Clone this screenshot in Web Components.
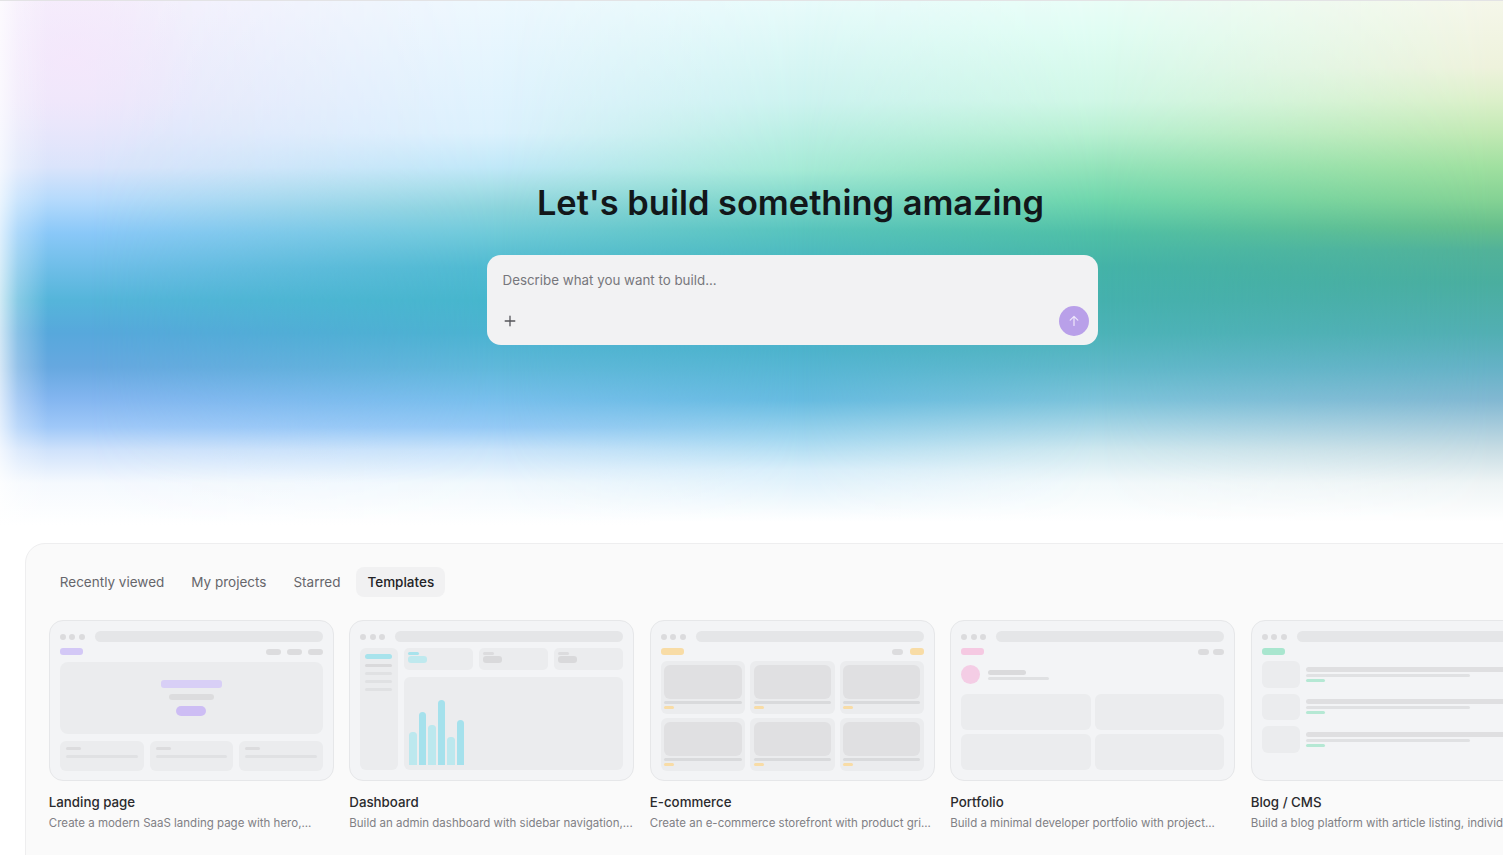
<!DOCTYPE html>
<html lang="en">
<head>
<meta charset="utf-8">
<title>Templates</title>
<style>
  html, body { margin: 0; height: 100%; overflow: hidden; background: #fff; }
  body { font-family: Inter, "Liberation Sans", sans-serif; color: #18181b; }
</style>
</head>
<body>
<hero-area>
  <prompt-box placeholder="Describe what you want to build..."></prompt-box>
</hero-area>
<projects-panel>
  <template-card title="Landing page" desc="Create a modern SaaS landing page with hero,..." kind="landing"></template-card>
  <template-card title="Dashboard" desc="Build an admin dashboard with sidebar navigation,..." kind="dashboard"></template-card>
  <template-card title="E-commerce" desc="Create an e-commerce storefront with product gri..." kind="shop"></template-card>
  <template-card title="Portfolio" desc="Build a minimal developer portfolio with project..." kind="portfolio"></template-card>
  <template-card title="Blog / CMS" desc="Build a blog platform with article listing, individ" kind="blog"></template-card>
</projects-panel>

<script>
// colour columns of the hero wash: each fades in horizontally between from and to
const washColumns = [
  { from: 0, to: 0, stops: '#f5effc 0, #ebe8fb 100px, #dae4fb 167px, #b5dafc 200px, #8ac8f8 233px, #6fbee8 267px, #55b5da 300px, #57a8dc 333px, #66a8e0 367px, #84b6f0 400px, #9fc8f8 427px, #cfe2fb 450px, #f5f9fe 483px, #fff 525px' },
  { from: 90, to: 500, stops: '#edf8fe 0, #dbf1fd 133px, #c0e8f8 167px, #a7dfe8 187px, #8cd4dc 207px, #6fcad8 233px, #4fbad0 267px, #46b6cc 300px, #4bb3d0 333px, #5fb8da 367px, #78bfec 400px, #94c9f5 427px, #c8e3fa 450px, #f0f8fd 483px, #fff 525px' },
  { from: 500, to: 800, stops: '#e8fbfb 0, #cdf3f0 100px, #a5ead6 170px, #58c4bd 230px, #4ab8c0 260px, #4db3cc 350px, #66bbe0 400px, #a5d8f0 440px, #d8eefa 470px, #fff 522px' },
  { from: 800, to: 1100, stops: '#e9fdf7 0, #e0fdf3 33px, #d0f7e6 100px, #b8f0d2 133px, #93e3ba 167px, #6fd6ac 200px, #4fbfa6 233px, #44b3a8 267px, #45b1ae 300px, #4cb3b8 333px, #5fb8c9 367px, #7cc3da 400px, #a8d6e6 427px, #cfe8ef 450px, #f2f9fb 483px, #fff 522px' },
  { from: 1100, to: 1490, stops: '#f5f7ea 0, #eef2dc 67px, #dcf0ca 100px, #c2e9b4 133px, #a0e0a0 167px, #84d294 200px, #66bf8c 227px, #52b299 250px, #4aae9f 283px, #52afb3 333px, #65b2c6 367px, #82b8d2 400px, #a8ccdc 427px, #c8dde4 450px, #eef4f5 483px, #fff 522px' }
];

class HeroArea extends HTMLElement {
  constructor() {
    super();
    this.attachShadow({ mode: 'open' });
    this.shadowRoot.innerHTML = `
      <style>
        :host { display: block; position: relative; height: 543px; overflow: hidden; }
        .wash { position: absolute; inset: 0; pointer-events: none; }
        .pink { background: radial-gradient(130px 110px at 70px 60px, rgba(246,230,251,.7), rgba(246,230,251,0)); }
        .edge { background: linear-gradient(90deg, rgba(255,255,255,.72) 0, rgba(255,255,255,.3) 18px, rgba(255,255,255,0) 48px); }
        .line { position: absolute; left: 0; right: 0; top: 0; height: 1px; background: #e3e3e5; }
        .content { position: relative; display: flex; flex-direction: column; align-items: center; box-sizing: border-box; width: 1503px; padding: 180px 0 0 82px; }
        h1 { margin: 0 4px 30px 0; font-size: 34.4px; line-height: 45px; font-weight: 600; color: #12171a; white-space: nowrap; }
      </style>
      ${washColumns.map(c => `<div class="wash" style="background:linear-gradient(180deg, ${c.stops});${c.to ? `-webkit-mask-image:linear-gradient(90deg, transparent ${c.from}px, #000 ${c.to}px);` : ''}"></div>`).join('')}
      <div class="wash pink"></div>
      <div class="wash edge"></div>
      <div class="line"></div>
      <div class="content">
        <h1>Let's build something amazing</h1>
        <slot></slot>
      </div>
    `;
  }
}

class PromptBox extends HTMLElement {
  constructor() {
    super();
    this.attachShadow({ mode: 'open' });
    this.shadowRoot.innerHTML = `
      <style>
        :host { display: flex; flex-direction: column; justify-content: space-between; box-sizing: border-box;
          width: 611px; height: 90px; margin-right: 1px; padding: 17px 9px 9px 16px; background: #f2f2f3; border-radius: 14px; }
        .text { font-size: 13.35px; line-height: 17px; color: #77777c; }
        .row { display: flex; align-items: center; justify-content: space-between; }
        .plus { display: flex; width: 16px; height: 16px; margin-left: -1px; color: #55555a; }
        .send { display: flex; align-items: center; justify-content: center; width: 30px; height: 30px; border-radius: 50%; background: #b9a0e9; color: #eee6fb; }
      </style>
      <div class="text">${this.getAttribute('placeholder')}</div>
      <div class="row">
        <span class="plus"><svg width="16" height="16" viewBox="0 0 16 16" fill="none" stroke="currentColor" stroke-width="1.3" stroke-linecap="round"><path d="M8 3.2v9.6M3.2 8h9.6"/></svg></span>
        <span class="send"><svg width="14" height="14" viewBox="0 0 14 14" fill="none" stroke="currentColor" stroke-width="1.2" stroke-linecap="round" stroke-linejoin="round"><path d="M7 11.5v-9M3.2 6.2 7 2.4l3.8 3.8"/></svg></span>
      </div>
    `;
  }
}

class ProjectsPanel extends HTMLElement {
  constructor() {
    super();
    this.attachShadow({ mode: 'open' });
    const tabs = ['Recently viewed', 'My projects', 'Starred', 'Templates'];
    this.shadowRoot.innerHTML = `
      <style>
        :host { display: block; box-sizing: border-box; width: 1700px; height: 400px; margin-left: 25px; padding: 23px 22.8px 0; background: #fafafa; border: 1px solid #eeeeef; border-radius: 20px; }
        nav { display: flex; gap: 5px; margin-bottom: 23px; }
        nav span { padding: 0 11px; height: 30px; line-height: 30px; font-size: 13.5px; border-radius: 8px; color: #66666b; }
        nav span.active { background: #f1f1f2; color: #232326; font-weight: 500; }
        .cards { display: flex; gap: 15.3px; }
      </style>
      <nav>${tabs.map(t => `<span class="${t === 'Templates' ? 'active' : ''}">${t}</span>`).join('')}</nav>
      <div class="cards"><slot></slot></div>
    `;
  }
}

const bar = (w, h, c, extra = '') => `<i style="width:${typeof w === 'number' ? w + 'px' : w};height:${h}px;background:${c};${extra}"></i>`;
const GREY = '#dcdcde', PALE = '#e0e1e3', BOX = '#ebecee';

const thumbs = {
  landing: `
    <div class="top">${bar(23, 7, '#d3c8f6')}<b></b>${bar(15, 6, GREY)}${bar(15, 6, GREY)}${bar(15, 6, GREY)}</div>
    <div class="hero">${bar(61, 8, '#d8cff6')}${bar(45, 6, GREY)}${bar(30, 10, '#cdbdf4', 'border-radius:5px')}</div>
    <div class="row3">${[0, 1, 2].map(() => `<div class="cell">${bar(15, 3, GREY)}${bar('100%', 3, PALE)}</div>`).join('')}</div>`,
  dashboard: `
    <div class="dash">
      <div class="side">${bar(27, 5, '#a8e3ec')}${bar(27, 3, '#d9d9db')}${bar(27, 3, PALE)}${bar(27, 3, PALE)}${bar(27, 3, PALE)}</div>
      <div class="main">
        <div class="stats">
          <div class="stat">${bar(11, 3, '#a8e3ec')}${bar(19, 7, '#bfe9ee')}</div>
          <div class="stat">${bar(11, 3, GREY)}${bar(19, 7, '#d9d9db')}</div>
          <div class="stat">${bar(11, 3, GREY)}${bar(19, 7, '#d9d9db')}</div>
        </div>
        <div class="chart">
          ${[33, 53, 40, 65, 28, 45].map((h, i) => bar(7.5, h, i % 2 ? '#a5e1ec' : '#bce8ee', 'border-radius:3.5px 3.5px 0 0')).join('')}
        </div>
      </div>
    </div>`,
  shop: `
    <div class="top">${bar(23, 7, '#f8dca6')}<b></b>${bar(11, 6, GREY)}${bar(14, 7, '#f8dca6', 'margin-left:1px')}</div>
    <div class="grid">${[0, 1, 2, 3, 4, 5].map(() => `<div class="prod"><u></u>${bar('100%', 3, '#d9dadc')}${bar(10, 3, '#f8dca6')}</div>`).join('')}</div>`,
  portfolio: `
    <div class="top">${bar(23, 7, '#f5c9e2')}<b></b>${bar(11, 6, GREY)}${bar(11, 6, GREY, 'margin-left:-2px')}</div>
    <div class="who"><em></em><div>${bar(38, 5, '#dadadc')}${bar(61, 3, PALE)}</div></div>
    <div class="work"><s></s><s></s><s></s><s></s></div>`,
  blog: `
    <div class="top">${bar(23, 7, '#a9e6cf')}<b></b></div>
    <div class="posts">${[0, 1, 2].map(() => `<div class="post"><u></u><div>${bar('100%', 5, '#dfdfe1')}${bar(164, 3, PALE)}${bar(19, 3, '#b5e8d4')}</div></div>`).join('')}</div>`
};

class TemplateCard extends HTMLElement {
  constructor() {
    super();
    this.attachShadow({ mode: 'open' });
  }

  connectedCallback() {
    const kind = this.getAttribute('kind');
    this.shadowRoot.innerHTML = `
      <style>
        :host { display: block; flex: none; width: 285.2px; }
        i { display: block; border-radius: 3px; flex: none; }
        b { flex: 1; }
        .thumb { box-sizing: border-box; height: 161px; padding: 10px; background: #f3f4f6; border: 1px solid #e6e7e9; border-radius: 14px; overflow: hidden; display: flex; flex-direction: column; }
        .chrome { display: flex; align-items: center; gap: 3.5px; height: 11px; margin-bottom: 6px; flex: none; }
        .chrome span { width: 6px; height: 6px; border-radius: 50%; background: #dbdbdd; }
        .chrome div { flex: 1; height: 11px; margin-left: 6.5px; border-radius: 6px; background: #e5e6e8; }
        .top { display: flex; align-items: center; gap: 6px; height: 7px; margin-bottom: 7px; flex: none; }
        .hero { height: 72px; background: ${BOX}; border-radius: 8px; display: flex; flex-direction: column; align-items: center; justify-content: center; gap: 6px; margin-bottom: 7px; flex: none; }
        .row3 { display: grid; grid-template-columns: 1fr 1fr 1fr; gap: 6px; }
        .cell { height: 30px; box-sizing: border-box; padding: 6px; background: ${BOX}; border-radius: 6px; display: flex; flex-direction: column; gap: 5px; }
        .dash { display: flex; gap: 6px; flex: 1; min-height: 0; }
        .side { width: 38px; box-sizing: border-box; padding: 6px 5px; background: ${BOX}; border-radius: 6px; display: flex; flex-direction: column; gap: 5px; }
        .main { flex: 1; display: flex; flex-direction: column; gap: 7px; }
        .stats { display: grid; grid-template-columns: 1fr 1fr 1fr; gap: 6px; }
        .stat { height: 22px; box-sizing: border-box; padding: 4px; background: ${BOX}; border-radius: 5px; display: flex; flex-direction: column; gap: 1px; }
        .chart { flex: 1; background: ${BOX}; border-radius: 6px; display: flex; align-items: flex-end; gap: 2px; padding: 0 5px 5px; }
        .grid { display: grid; grid-template-columns: 1fr 1fr 1fr; gap: 4px 5px; margin-top: -1px; }
        .prod { height: 53px; box-sizing: border-box; padding: 4px 3.5px; background: ${BOX}; border-radius: 6px; display: flex; flex-direction: column; gap: 2px; }
        .prod u { display: block; height: 34px; flex: none; border-radius: 6px; background: #e0e0e2; }
        .who { display: flex; align-items: center; gap: 8px; height: 19px; margin: 3px 0 10px; flex: none; }
        .who em { width: 19px; height: 19px; border-radius: 50%; background: #f4cde5; }
        .who div { display: flex; flex-direction: column; gap: 2px; }
        .work { flex: 1; display: grid; grid-template-columns: 1fr 1fr; grid-template-rows: 1fr 1fr; gap: 4px; }
        .work s { background: ${BOX}; border-radius: 6px; }
        .posts { display: flex; flex-direction: column; gap: 6px; margin-top: -1px; }
        .post { display: flex; gap: 6px; height: 26.5px; align-items: center; }
        .post u { display: block; width: 38px; height: 26.5px; flex: none; background: ${BOX}; border-radius: 6px; }
        .post div { flex: 1; display: flex; flex-direction: column; gap: 2px; }
        h3 { margin: 13px 0 0; font-size: 13.3px; line-height: 17px; font-weight: 500; color: #2a2a2d; white-space: nowrap; }
        p { margin: 4px 0 0; font-size: 11.5px; line-height: 16px; color: #808085; white-space: nowrap; }
      </style>
      <div class="thumb">
        <div class="chrome"><span></span><span></span><span></span><div></div></div>
        ${thumbs[kind]}
      </div>
      <h3>${this.getAttribute('title')}</h3>
      <p>${this.getAttribute('desc')}</p>
    `;
  }
}

customElements.define('hero-area', HeroArea);
customElements.define('prompt-box', PromptBox);
customElements.define('projects-panel', ProjectsPanel);
customElements.define('template-card', TemplateCard);
</script>
</body>
</html>
